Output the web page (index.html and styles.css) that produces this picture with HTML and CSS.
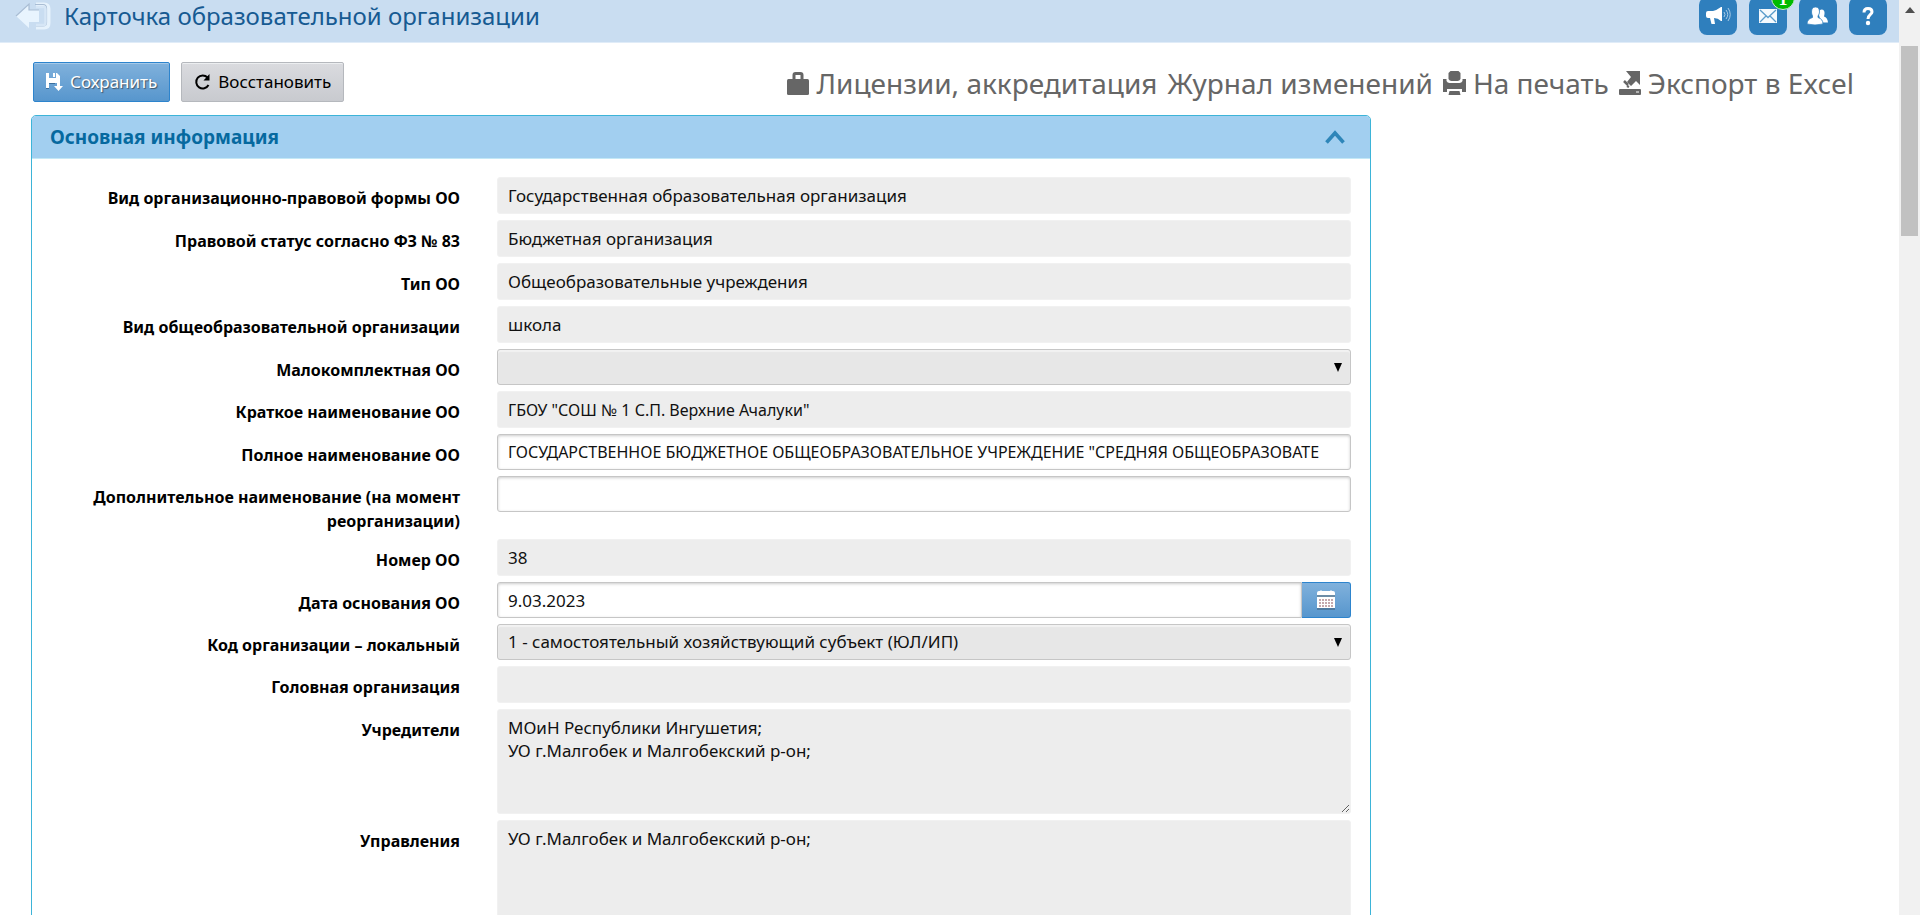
FILE: index.html
```html
<!DOCTYPE html>
<html lang="ru">
<head>
<meta charset="utf-8">
<title>Карточка образовательной организации</title>
<link rel="stylesheet" href="styles.css">
</head>
<body>
<div class="page">
  <header class="topbar">
    <button class="back" type="button" aria-label="Назад">
      <svg width="36" height="28" viewBox="0 0 36 28"><path d="M21 3h8q4 0 4 4v14q0 4-4 4h-8" fill="none" stroke="#e6f2fc" stroke-width="5"/><path d="M20 2.500h8q3.500 0 3.500 4v14q0 3.500-3.500 3.500h-7" fill="none" stroke="#a9bdd4" stroke-width="1.200"/><path d="M21 5h8q1.500 0 1.500 3v12q0 3-1.500 3h-8" fill="none" stroke="#d6e6f6" stroke-width="2.500"/><path d="M1 14 14 2v6h10v12H14v6z" fill="#e8f4fe"/><path d="M1 14 14 2v6h10" fill="none" stroke="#a9bdd4" stroke-width="1.200"/></svg>
    </button>
    <h1 class="title">Карточка образовательной организации</h1>
    <nav class="tiles">
      <button class="tile" type="button" aria-label="Объявления">
        <svg width="26" height="20" viewBox="0 0 26 20"><path d="M1 7q0-2 2-2h5q4-1 8-4h1v14h-1q-3-3-7-3l1 6H6.500L5 12H3q-2 0-2-2z" fill="#fff"/><path d="M19 6q2 2.500 0 5M21 4q3.500 4.500 0 9M23 2q4.500 6.500 0 13" fill="none" stroke="#a9cbe6" stroke-width="1"/></svg>
      </button>
      <button class="tile" type="button" aria-label="Сообщения">
        <svg width="18" height="14" viewBox="0 0 18 14"><path d="M0 0h18v14H0z" fill="#f4f9fd"/><path d="M1 1l8 7.500L17 1M1 13l6-6M17 13l-6-6" fill="none" stroke="#5a9ccb" stroke-width="1.300"/></svg>
        <span class="badge">1</span>
      </button>
      <button class="tile" type="button" aria-label="Пользователи">
        <svg width="22" height="18" viewBox="0 0 22 18"><path d="M12 8q-1-5 2.500-5.500Q18 2.500 17.500 7L17 9.500q3.500 1 4 6H14z" fill="#fff"/><path d="M4.500 5Q4.500 0 8.500 0t4 5q0 2-1.500 4l0 1.500q5 1.500 5 6.500-8 2-16 0 0-5 5.500-6.500V9Q4.500 7 4.500 5z" fill="#fff" stroke="#2f7fbd" stroke-width=".8"/></svg>
      </button>
      <button class="tile" type="button" aria-label="Помощь">
        <svg width="14" height="20" viewBox="0 0 14 20"><path d="M3 6.500Q3 2.500 7 2.500t4 3.500C11 8.500 7 8.500 7 13" fill="none" stroke="#fff" stroke-width="3"/><circle cx="7" cy="17" r="2.200" fill="#fff"/></svg>
      </button>
    </nav>
  </header>

  <main class="content">
    <div class="toolbar">
      <button class="btn btn-save" type="button">
        <svg width="17" height="18" viewBox="0 0 17 18"><path d="M0 0h3v5h7V0h1l3 3v6h-3v1H3v5H0z" fill="#fff"/><path d="M7 0h2v4H7z" fill="#fff"/><path d="M11 9h3v4h3l-4.500 5L8 13h3z" fill="#fff"/><path d="M0 15.500h3M3 10.500h6" stroke="#3b6f9e"/></svg>
        <span>Сохранить</span>
      </button>
      <button class="btn btn-reset" type="button">
        <svg width="17" height="18" viewBox="0 0 17 18"><path d="M13.500 4.500A6.500 6.500 0 1 0 14.500 12" fill="none" stroke="#000" stroke-width="2"/><path d="M15.500 1v6.500H9.500z" fill="#000"/></svg>
        <span>Восстановить</span>
      </button>
      <nav class="links">
        <a href="#licenses"><svg width="22" height="24" viewBox="0 0 22 24"><path d="M7 9V4q0-1.500 1.500-1.500h5Q15 2.500 15 4v5" fill="none" stroke="#666" stroke-width="3"/><rect y="8" width="22" height="16" rx="1.500" fill="#666"/></svg><span>Лицензии, аккредитация</span></a>
        <a href="#journal"><span>Журнал изменений</span></a>
        <a href="#print"><svg width="23" height="24" viewBox="0 0 23 24" fill="#666"><path d="M7.500 0h8l2 2v6q-1 2-3 2h-6q-2 0-3-2V2z"/><path d="M0 8h3.500v2q1 2 3 2h10q2 0 3-2V8H23v13h-4v-3H4v3H0z"/><path d="M6.500 20h10l1 4h-12z"/></svg><span>На печать</span></a>
        <a href="#export"><svg width="22" height="24" viewBox="0 0 22 24"><path d="M7 0h14v14l-4-4-5 5-4-4 4-5z" fill="#666"/><path d="M5 10l4 4M8 15l2 1" stroke="#666" stroke-width="2.500"/><rect y="18" width="22" height="6" rx="1" fill="#666"/><path d="M17 21h3" stroke="#fff"/></svg><span>Экспорт в Excel</span></a>
      </nav>
    </div>

    <section class="panel">
      <div class="panel-head">
        <h2>Основная информация</h2>
        <button class="collapse" type="button" aria-label="Свернуть"><svg width="20" height="14" viewBox="0 0 20 14"><path d="M1.500 12.500 10 3l8.500 9.500" fill="none" stroke="#2e86b9" stroke-width="3.600"/></svg></button>
      </div>
      <form class="form">
        <div class="row"><label for="f1">Вид организационно-правовой формы ОО</label><input id="f1" class="ctl ro" readonly value="Государственная образовательная организация"></div>
        <div class="row"><label for="f2">Правовой статус согласно ФЗ № 83</label><input id="f2" class="ctl ro" readonly value="Бюджетная организация"></div>
        <div class="row"><label for="f3">Тип ОО</label><input id="f3" class="ctl ro" readonly value="Общеобразовательные учреждения"></div>
        <div class="row"><label for="f4">Вид общеобразовательной организации</label><input id="f4" class="ctl ro" readonly value="школа"></div>
        <div class="row"><label for="f5">Малокомплектная ОО</label><div class="pick"><select id="f5" class="ctl"><option></option></select><svg width="8" height="9" viewBox="0 0 8 9"><path d="M0 0h8L4 9z"/></svg></div></div>
        <div class="row"><label for="f6">Краткое наименование ОО</label><input id="f6" class="ctl ro caps" readonly value='ГБОУ "СОШ № 1 С.П. Верхние Ачалуки"'></div>
        <div class="row"><label for="f7">Полное наименование ОО</label><input id="f7" class="ctl text caps" value='ГОСУДАРСТВЕННОЕ БЮДЖЕТНОЕ ОБЩЕОБРАЗОВАТЕЛЬНОЕ УЧРЕЖДЕНИЕ "СРЕДНЯЯ ОБЩЕОБРАЗОВАТЕ'></div>
        <div class="row"><label for="f8">Дополнительное наименование (на момент реорганизации)</label><input id="f8" class="ctl text"></div>
        <div class="row"><label for="f9">Номер ОО</label><input id="f9" class="ctl ro" readonly value="38"></div>
        <div class="row"><label for="f10">Дата основания ОО</label><div class="date"><input id="f10" class="ctl text" value="9.03.2023"><button type="button" aria-label="Выбрать дату"><svg width="18" height="20" viewBox="0 0 18 20"><path d="M0 3q0-2 2-2h1q1-1.500 2 0h8q1-1.500 2 0h1q2 0 2 2v2H0z" fill="#fff"/><path d="M0 7h18v11H0z" fill="#fff"/><path d="M0 6h18" stroke="#6c8496" stroke-width="1.500"/><path d="M0 19h18" stroke="#4a6f90" stroke-width="1.500"/><path d="M2 10h14M2 13h14M2 16h14" stroke="#b38d93" stroke-width="1.500" stroke-dasharray="2 1"/></svg></button></div></div>
        <div class="row"><label for="f11">Код организации – локальный</label><div class="pick"><select id="f11" class="ctl"><option>1 - самостоятельный хозяйствующий субъект (ЮЛ/ИП)</option></select><svg width="8" height="9" viewBox="0 0 8 9"><path d="M0 0h8L4 9z"/></svg></div></div>
        <div class="row"><label for="f12">Головная организация</label><input id="f12" class="ctl ro" readonly></div>
        <div class="row"><label for="f13">Учредители</label><textarea id="f13" class="ctl ro area" readonly>МОиН Республики Ингушетия;
УО г.Малгобек и Малгобекский р-он;</textarea></div>
        <div class="row"><label for="f14">Управления</label><textarea id="f14" class="ctl ro area" readonly>УО г.Малгобек и Малгобекский р-он;</textarea></div>
      </form>
    </section>
  </main>
</div>
<div class="scrollbar" aria-hidden="true">
  <svg width="10" height="6" viewBox="0 0 10 6"><path d="M0 6 5 0l5 6z" fill="#505050"/></svg>
  <div class="thumb"></div>
</div>
</body>
</html>
```
FILE: styles.css
```css
* { box-sizing: border-box; }
body {
  margin: 0;
  height: 100vh;
  display: flex;
  overflow: hidden;
  background: #fff;
  color: #000;
  font: 16px/24px "Noto Sans", sans-serif;
}
button, input, select, textarea { font: inherit; }
button { cursor: pointer; }
svg { flex: none; }
.page { flex: 1; min-width: 0; overflow: hidden; }

.topbar {
  display: flex;
  align-items: flex-end;
  height: 43px;
  padding: 0 12px 7px 15px;
  background: #c9ddf1;
  border-bottom: 1px solid #e0ecf8;
}
.back { display: flex; align-items: center; padding: 0; border: 0; background: none; height: 38px; }
.title { flex: 1; margin: 0 0 2px 13px; font-size: 24px; line-height: 34px; font-weight: 400; color: #165a92; }
.tiles { display: flex; gap: 12px; }
.tile {
  position: relative;
  display: flex;
  align-items: center;
  justify-content: center;
  width: 38px;
  height: 38px;
  padding: 0;
  border: 0;
  border-radius: 8px;
  background: #2f7fbd;
}
.badge {
  position: absolute;
  right: -8px;
  top: -11px;
  width: 24px;
  height: 24px;
  border: 1px solid #cfe6d8;
  border-radius: 50%;
  background: #0b0;
  color: #fff;
  font: bold 18px/24px "Liberation Serif", serif;
}

.content { padding: 19px 31px 0; }
.toolbar { display: flex; align-items: center; gap: 11px; padding: 0 14px 13px 2px; }
.btn {
  display: flex;
  align-items: center;
  gap: 7px;
  height: 40px;
  padding: 0 12px;
  border: 1px solid #b5b8bd;
  border-radius: 2px;
  font-size: 17px;
  white-space: nowrap;
}
.btn-save {
  border-color: #2d84cd;
  background: linear-gradient(#80b1dc, #5796cd);
  box-shadow: inset 0 1px 0 #a5c9e8;
  color: #fff;
  text-shadow: 1px 1px 1px #456;
}
.btn-reset { background: linear-gradient(#dadbdf, #c8cacf); box-shadow: inset 0 1px 0 #eceef0; }
.links { display: flex; flex: 1; justify-content: flex-end; gap: 10px; padding-top: 2px; }
.links a {
  display: flex;
  align-items: center;
  gap: 7px;
  color: #666;
  font-size: 28px;
  line-height: 32px;
  text-decoration: none;
  white-space: nowrap;
}

.panel { max-width: 1340px; border: 1px solid #3db4d8; border-radius: 5px 5px 0 0; overflow: hidden; }
.panel-head {
  display: flex;
  align-items: center;
  justify-content: space-between;
  height: 43px;
  padding: 0 25px 0 18px;
  background: #a2cff0;
  border-bottom: 1px solid #c4e8f6;
}
.panel-head h2 { margin: 0; font-size: 19px; color: #06699f; }
.collapse { display: flex; padding: 0; border: 0; background: none; }

.form { display: flex; flex-direction: column; gap: 6px; padding: 18px 19px 0 18px; }
.row { display: grid; grid-template-columns: 410px minmax(0, 1fr); column-gap: 37px; align-items: start; }
.row label { padding-top: 9px; font-weight: 700; text-align: right; }
.ctl {
  display: block;
  width: 100%;
  height: 36px;
  margin: 0;
  padding: 0 10px;
  border: 1px solid #c6c6c6;
  border-radius: 3px;
  background: #fff;
  color: #111;
  font-size: 17px;
  outline: 0;
}
.caps { font-size: 16px; }
.ro { height: 37px; border-color: #f1f1f1; background: #ededed; }
.text { box-shadow: inset 0 1px 3px #ccc; }
.area { height: 105px; padding: 6px 10px; line-height: 23px; resize: both; }
.pick { position: relative; }
.pick select { appearance: none; background: #e7e7e7; box-shadow: inset 0 2px 1px #f2f2f2; }
.pick svg { position: absolute; right: 9px; top: 14px; pointer-events: none; }
.date { display: flex; }
.date .ctl { border-radius: 3px 0 0 3px; }
.date button {
  display: flex;
  flex: none;
  align-items: center;
  justify-content: center;
  width: 49px;
  height: 36px;
  padding: 0;
  border: 1px solid #2d84cd;
  border-left: 0;
  border-radius: 0 3px 3px 0;
  background: linear-gradient(#80b1dc, #5796cd);
}

.scrollbar {
  display: flex;
  flex-direction: column;
  align-items: center;
  gap: 33px;
  width: 21px;
  padding: 7px 2px 0;
  background: #f1f1f1;
}
.thumb { width: 17px; height: 190px; background: #c1c1c1; }
```
